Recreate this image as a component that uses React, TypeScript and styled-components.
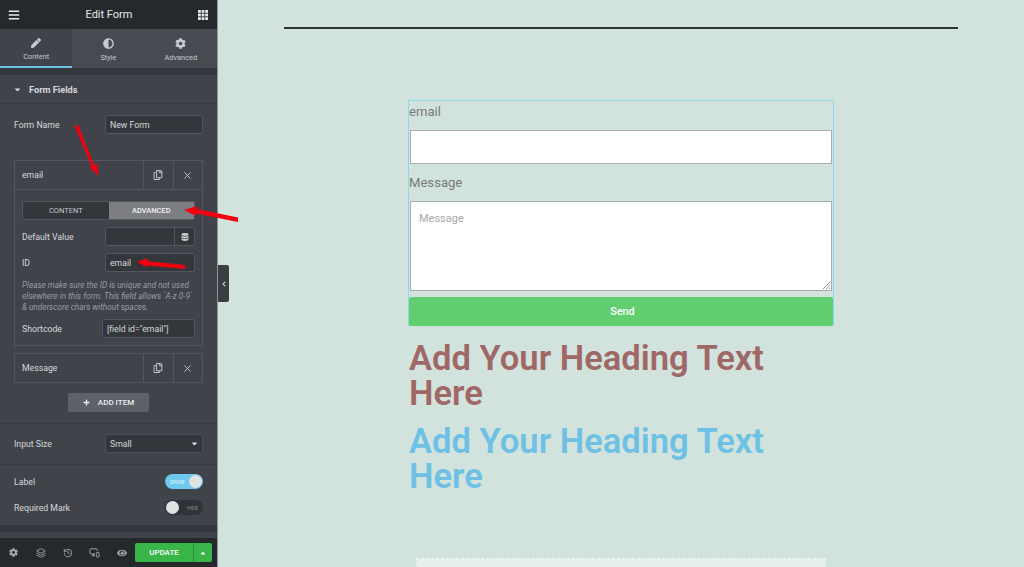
import React from "react";
import styled, { createGlobalStyle } from "styled-components";
import {
  FaBars, FaPen, FaAdjust, FaCog, FaCaretDown, FaCaretUp, FaRegCopy, FaDatabase,
  FaChevronLeft, FaPlus, FaEye,
} from "react-icons/fa";
import { History, Layers, MonitorSmartphone, X } from "lucide-react";

const Global = createGlobalStyle`
  html, body { margin: 0; padding: 0; height: 567px; overflow: hidden; }
  body { font-family: Roboto, "Liberation Sans", sans-serif; background: #d1e3dc; }
  * { box-sizing: border-box; }
`;

const Page = styled.div`
  position: relative;
  display: flex;
  width: 1024px;
  height: 567px;
  overflow: hidden;
`;
const Sidebar = styled.aside`
  width: 218px;
  flex: none;
  height: 567px;
  display: flex;
  flex-direction: column;
  background: #404349;
  border-right: 1px solid #8b9a95;
  color: #d5d8dc;
  font-size: 8.7px;
`;
const Header = styled.header`
  height: 29px;
  flex: none;
  background: #26292c;
  display: flex;
  align-items: center;
  justify-content: space-between;
  padding: 0 9px 0 8px;
  color: #e6e9ec;
  font-size: 11px;
  svg { display: block; }
`;
const Tabs = styled.div`
  display: flex;
  height: 39px;
  flex: none;
  background: #474a50;
`;
const Tab = styled.div<{ $active?: boolean }>`
  width: 72.6px;
  display: flex;
  flex-direction: column;
  align-items: center;
  padding-top: 9px;
  gap: 4px;
  font-size: 7.4px;
  line-height: 9px;
  color: #c5c8cc;
  background: ${(p) => (p.$active ? "#404349" : "#474a50")};
  border-bottom: 2px solid ${(p) => (p.$active ? "#6ec1e4" : "transparent")};
  svg { display: block; }
`;
const Strip = styled.div<{ $h: number }>`
  height: ${(p) => p.$h}px;
  flex: none;
  background: #34373c;
`;
const Gap = styled.div<{ $h: number }>`
  height: ${(p) => p.$h}px;
  flex: none;
`;
const SectionHead = styled.div`
  height: 29px;
  flex: none;
  display: flex;
  align-items: center;
  gap: 7px;
  padding-left: 13px;
  font-weight: 700;
  font-size: 9.2px;
  color: #d5d8dc;
  border-bottom: 1px solid #383b40;
`;
const Body = styled.div`
  flex: 1;
  display: flex;
  flex-direction: column;
  padding: 11px 14px 0;
`;
const Row = styled.div`
  display: flex;
  align-items: center;
  justify-content: space-between;
  min-height: 19px;
`;
const Field = styled.div<{ $w?: number }>`
  width: ${(p) => p.$w ?? 98}px;
  height: 19px;
  display: flex;
  align-items: center;
  justify-content: space-between;
  padding-left: 4px;
  background: #33363b;
  border: 1px solid #53565c;
  border-radius: 2px;
  color: #d5d8dc;
  font-size: 8.7px;
`;
const Repeater = styled.div<{ $mt: number }>`
  margin-top: ${(p) => p.$mt}px;
  border: 1px solid #53565c;
`;
const RepeaterHead = styled.div`
  height: 28px;
  display: flex;
  align-items: center;
  padding-left: 7px;
`;
const RepeaterName = styled.div`
  flex: 1;
`;
const RepeaterTool = styled.div`
  width: 29.5px;
  height: 100%;
  display: flex;
  align-items: center;
  justify-content: center;
  border-left: 1px solid #53565c;
  color: #c5c8cc;
`;
const RepeaterBody = styled.div`
  border-top: 1px solid #53565c;
  padding: 11px 7px 0;
  height: 156px;
  display: flex;
  flex-direction: column;
`;
const Switcher = styled.div`
  display: flex;
  height: 19px;
  border-radius: 2px;
  overflow: hidden;
  border: 1px solid #53565c;
  font-size: 7.5px;
  margin-bottom: 7px;
`;
const SwitchItem = styled.div<{ $active?: boolean }>`
  flex: 1;
  display: flex;
  align-items: center;
  justify-content: center;
  font-weight: ${(p) => (p.$active ? 500 : 400)};
  background: ${(p) => (p.$active ? "#7d7e82" : "#33363b")};
  color: ${(p) => (p.$active ? "#f0f0f0" : "#c5c8cc")};
`;
const InnerField = styled(Field)`
  width: 90px;
`;
const DbButton = styled.div`
  width: 20px;
  height: 100%;
  display: flex;
  align-items: center;
  justify-content: center;
  border-left: 1px solid #53565c;
  color: #c5c8cc;
`;
const InnerRow = styled(Row)<{ $mt: number }>`
  margin-top: ${(p) => p.$mt}px;
`;
const Hint = styled.p`
  margin: 8px 0 6px;
  font-style: italic;
  font-size: 8.2px;
  line-height: 11px;
  color: #9a9da2;
  white-space: nowrap;
`;
const AddRow = styled.div`
  display: flex;
  justify-content: center;
  margin-top: 10px;
  margin-bottom: 11px;
`;
const AddButton = styled.div`
  width: 81px;
  height: 19px;
  border-radius: 2px;
  background: #5e6167;
  color: #eceef0;
  font-size: 8px;
  font-weight: 500;
  display: flex;
  align-items: center;
  justify-content: center;
  gap: 8px;
`;
const Divider = styled.div<{ $mt: number; $mb: number }>`
  height: 1px;
  flex: none;
  margin: ${(p) => p.$mt}px -14px ${(p) => p.$mb}px;
  background: #383b40;
`;
const SelectField = styled(Field)`
  padding-right: 3px;
  border-color: #4c4f55;
`;
const ToggleRow = styled(Row)<{ $mt: number }>`
  margin-top: ${(p) => p.$mt}px;
`;
const Toggle = styled.div<{ $on?: boolean }>`
  width: 38px;
  height: 15px;
  border-radius: 8px;
  padding: 0 1px;
  display: flex;
  align-items: center;
  justify-content: space-between;
  flex-direction: ${(p) => (p.$on ? "row" : "row-reverse")};
  background: ${(p) => (p.$on ? "#6ec9ee" : "#2f3236")};
  font-size: 5px;
  color: ${(p) => (p.$on ? "#e6f6fc" : "#8a8d92")};
`;
const ToggleText = styled.span`
  padding: 0 4px;
`;
const Knob = styled.span`
  width: 13px;
  height: 13px;
  border-radius: 50%;
  background: #e0e2e4;
`;
const Footer = styled.footer`
  height: 29px;
  flex: none;
  background: #26292c;
  display: flex;
  align-items: center;
  color: #a6a9ad;
`;
const FooterIcon = styled.div`
  width: 27px;
  display: flex;
  justify-content: center;
  svg { display: block; }
`;
const UpdateGroup = styled.div`
  display: flex;
  height: 19px;
  width: 77px;
  border-radius: 2px;
  overflow: hidden;
  background: #39b54a;
  color: #fff;
  font-size: 8px;
  font-weight: 500;
`;
const UpdateLabel = styled.div`
  flex: 1;
  display: flex;
  align-items: center;
  justify-content: center;
  border-right: 1px solid #2b8c39;
`;
const UpdateCaret = styled.div`
  width: 18px;
  display: flex;
  align-items: center;
  justify-content: center;
`;
const Collapse = styled.div`
  position: absolute;
  left: 218px;
  top: 265px;
  width: 11px;
  height: 37px;
  background: #3a3d42;
  color: #d5d8dc;
  display: flex;
  align-items: center;
  justify-content: center;
  border-radius: 0 2px 2px 0;
`;
const Main = styled.main`
  flex: 1;
  display: flex;
  flex-direction: column;
  align-items: center;
  background: #d1e3dc;
  padding-top: 27px;
`;
const TopRule = styled.div`
  width: 674px;
  height: 2px;
  flex: none;
  background: #2a3338;
`;
const FormWidget = styled.div`
  margin-top: 71px;
  width: 426px;
  height: 226px;
  flex: none;
  border: 1px solid #8fd8ea;
  display: flex;
  flex-direction: column;
`;
const FormLabel = styled.div<{ $mt: number }>`
  margin-top: ${(p) => p.$mt}px;
  height: 16px;
  line-height: 16px;
  font-size: 13.1px;
  color: #7a7a7a;
`;
const TextInput = styled.div<{ $h: number; $mt: number }>`
  margin: ${(p) => p.$mt}px 1px 0;
  height: ${(p) => p.$h}px;
  flex: none;
  background: #fff;
  border: 1px solid #a9aeac;
  position: relative;
  padding: 10px 8px;
  font-size: 11px;
  color: #a8a8a8;
`;
const Grip = styled.svg`
  position: absolute;
  right: 0;
  bottom: 0;
`;
const SendButton = styled.div`
  margin-top: 6px;
  height: 29px;
  flex: none;
  background: #61ce70;
  border-radius: 2px;
  color: #fff;
  font-size: 10.8px;
  font-weight: 500;
  padding-left: 3px;
  display: flex;
  align-items: center;
  justify-content: center;
`;
const Heading = styled.h2<{ $color: string; $mt: number }>`
  margin: ${(p) => p.$mt}px 0 0;
  width: 426px;
  flex: none;
  font-size: 34.6px;
  line-height: 35px;
  font-weight: 600;
  color: ${(p) => p.$color};
  padding: 0 40px 0 1px;
`;
const DropZone = styled.div`
  margin-top: 65px;
  width: 408px;
  height: 20px;
  flex: none;
  background: #e6f0ec;
  outline: 1px dashed #f1f5f3;
`;
const Arrows = styled.svg`
  position: absolute;
  left: 0;
  top: 0;
  pointer-events: none;
`;

const Grid = () => (
  <svg width="10" height="10" viewBox="0 0 10 10" fill="currentColor">
    {[0, 3.6, 7.2].map((y) =>
      [0, 3.6, 7.2].map((x) => <rect key={`${x}-${y}`} x={x} y={y} width="2.8" height="2.8" />)
    )}
  </svg>
);

export default function App() {
  return (
    <Page>
      <Global />
      <Sidebar>
        <Header>
          <FaBars size={12} />
          <span>Edit Form</span>
          <Grid />
        </Header>
        <Tabs>
          <Tab $active><FaPen size={10} />Content</Tab>
          <Tab><FaAdjust size={11} />Style</Tab>
          <Tab><FaCog size={11} />Advanced</Tab>
        </Tabs>
        <Strip $h={7} />
        <SectionHead><FaCaretDown size={9} />Form Fields</SectionHead>
        <Body>
          <Row>
            <span>Form Name</span>
            <Field>New Form</Field>
          </Row>
          <Repeater $mt={26}>
            <RepeaterHead>
              <RepeaterName>email</RepeaterName>
              <RepeaterTool><FaRegCopy size={10} /></RepeaterTool>
              <RepeaterTool><X size={11} /></RepeaterTool>
            </RepeaterHead>
            <RepeaterBody>
              <Switcher>
                <SwitchItem>CONTENT</SwitchItem>
                <SwitchItem $active>ADVANCED</SwitchItem>
              </Switcher>
              <Row>
                <span>Default Value</span>
                <InnerField>
                  <span />
                  <DbButton><FaDatabase size={8} /></DbButton>
                </InnerField>
              </Row>
              <InnerRow $mt={7}>
                <span>ID</span>
                <InnerField>email</InnerField>
              </InnerRow>
              <Hint>
                Please make sure the ID is unique and not used<br />
                elsewhere in this form. This field allows `A-z 0-9`<br />
                &amp; underscore chars without spaces.
              </Hint>
              <Row>
                <span>Shortcode</span>
                <Field $w={93}>[field id="email"]</Field>
              </Row>
            </RepeaterBody>
          </Repeater>
          <Repeater $mt={7}>
            <RepeaterHead>
              <RepeaterName>Message</RepeaterName>
              <RepeaterTool><FaRegCopy size={10} /></RepeaterTool>
              <RepeaterTool><X size={11} /></RepeaterTool>
            </RepeaterHead>
          </Repeater>
          <AddRow>
            <AddButton><FaPlus size={7} />ADD ITEM</AddButton>
          </AddRow>
          <Divider $mt={0} $mb={10} />
          <Row>
            <span>Input Size</span>
            <SelectField>Small<FaCaretDown size={9} /></SelectField>
          </Row>
          <Divider $mt={11} $mb={7} />
          <ToggleRow $mt={0}>
            <span>Label</span>
            <Toggle $on><ToggleText>SHOW</ToggleText><Knob /></Toggle>
          </ToggleRow>
          <ToggleRow $mt={7}>
            <span>Required Mark</span>
            <Toggle><ToggleText>HIDE</ToggleText><Knob /></Toggle>
          </ToggleRow>
        </Body>
        <Strip $h={7} />
        <Gap $h={6} />
        <Footer>
          <FooterIcon><FaCog size={9} /></FooterIcon>
          <FooterIcon><Layers size={10} /></FooterIcon>
          <FooterIcon><History size={10} /></FooterIcon>
          <FooterIcon><MonitorSmartphone size={11} /></FooterIcon>
          <FooterIcon><FaEye size={10} /></FooterIcon>
          <UpdateGroup>
            <UpdateLabel>UPDATE</UpdateLabel>
            <UpdateCaret><FaCaretUp size={8} /></UpdateCaret>
          </UpdateGroup>
        </Footer>
      </Sidebar>
      <Collapse><FaChevronLeft size={6} /></Collapse>
      <Main>
        <TopRule />
        <FormWidget>
          <FormLabel $mt={3}>email</FormLabel>
          <TextInput $h={34} $mt={10} />
          <FormLabel $mt={11}>Message</FormLabel>
          <TextInput $h={90} $mt={10}>
            Message
            <Grip width="9" height="9" viewBox="0 0 9 9">
              <path d="M1 8 8 1M4 8 8 4M6.5 8 8 6.5" stroke="#999" strokeWidth="1" fill="none" />
            </Grip>
          </TextInput>
          <SendButton>Send</SendButton>
        </FormWidget>
        <Heading $color="#a06767" $mt={15}>Add Your Heading Text Here</Heading>
        <Heading $color="#6ec1e4" $mt={13}>Add Your Heading Text Here</Heading>
        <DropZone />
      </Main>
      <Arrows width="240" height="290" viewBox="0 0 240 290">
        <path d="M74.5 126 L78 124.5 L94 165 L97 163.5 L99 176 L89.5 167.5 L91.5 166 Z" fill="#f2000f" />
        <path d="M184 210 L197 206 L197 209 L238 217.5 L238 222 L196 213.5 L196 216 Z" fill="#f2000f" />
        <path d="M137 262 L147 258 L147 261 L185 265 L185 269 L147 265.5 L147 267.5 Z" fill="#f2000f" />
      </Arrows>
    </Page>
  );
}
